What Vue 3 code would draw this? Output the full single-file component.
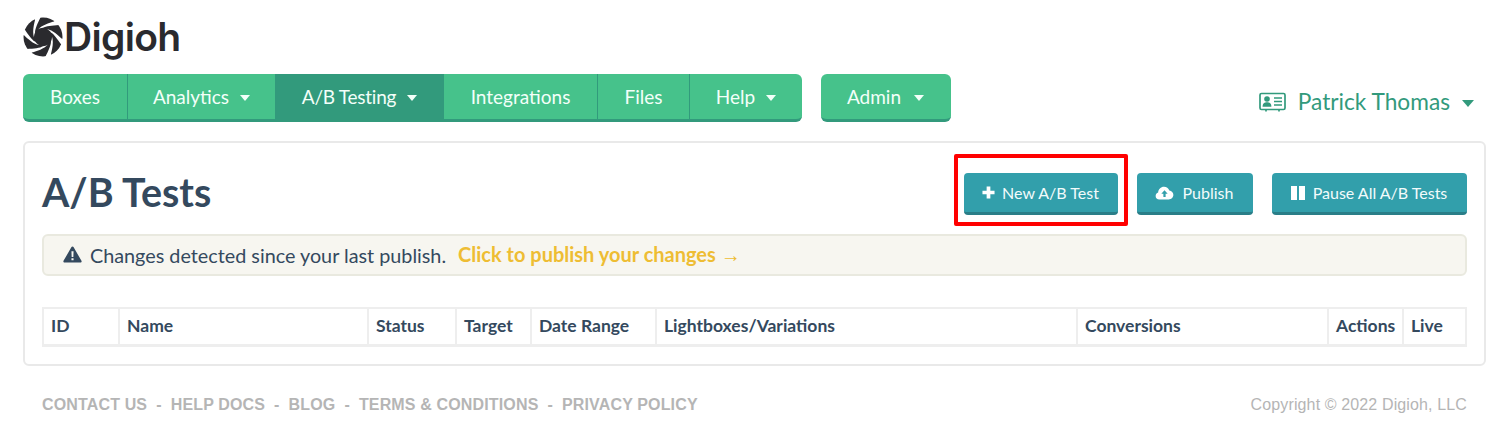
<script setup>
const navMain = [
  { label: 'Boxes', w: 104 },
  { label: 'Analytics', w: 148, caret: true },
  { label: 'A/B Testing', w: 169, caret: true, active: true },
  { label: 'Integrations', w: 153 },
  { label: 'Files', w: 92 },
  { label: 'Help', w: 113, caret: true }
]
const cols = [
  ['ID', 76], ['Name', 249], ['Status', 88], ['Target', 75], ['Date Range', 125],
  ['Lightboxes/Variations', 421], ['Conversions', 251], ['Actions', 75], ['Live', 63]
]
const footer = ['CONTACT US', 'HELP DOCS', 'BLOG', 'TERMS & CONDITIONS', 'PRIVACY POLICY']
const blades = [0, 60, 120, 180, 240, 300]
</script>

<template>
  <div class="page">
    <div class="logo">
      <svg class="logo-mark" viewBox="0 0 40 40" width="40" height="40">
        <circle cx="20" cy="20" r="19.5" fill="#2a2a2e" />
        <g v-for="a in blades" :key="a" :transform="`rotate(${a} 20 20)`">
          <path d="M15 12.5 C19 8 26 6 31 4.5 L35 0 L40 5 L36 8 C29 8.5 23 9 20 10.8 C18 11 16.5 11.5 15 12.5 Z" fill="#fff" />
        </g>
      </svg>
      <span class="logo-text">Digioh</span>
    </div>

    <div class="navrow">
      <nav class="nav">
        <a v-for="n in navMain" :key="n.label" class="nav-item" :class="{ active: n.active }" :style="{ width: n.w + 'px' }">
          {{ n.label }}<i v-if="n.caret" class="caret"></i>
        </a>
      </nav>
      <nav class="nav admin">
        <a class="nav-item admin-item">Admin<i class="caret"></i></a>
      </nav>
      <div class="user">
        <svg class="user-icon" viewBox="0 0 27 20" width="27" height="20">
          <rect x="1" y="1.5" width="25" height="16" rx="1.5" fill="none" stroke="#329a7c" stroke-width="1.7" />
          <path d="M7 18v1.5M20 18v1.5" stroke="#329a7c" stroke-width="1.7" />
          <circle cx="8" cy="7" r="2.8" fill="#329a7c" />
          <path d="M3.6 14.8 C3.6 11 5.5 10.2 8 10.2 C10.5 10.2 12.4 11 12.4 14.8 Z" fill="#329a7c" />
          <path d="M15 6h8M15 9.5h8M15 13h8" stroke="#329a7c" stroke-width="1.5" />
        </svg>
        <span>Patrick Thomas</span><i class="caret user-caret"></i>
      </div>
    </div>

    <main class="card">
      <div class="head">
        <h1>A/B Tests</h1>
        <div class="actions">
          <span class="highlight">
            <a class="btn w154">
              <svg viewBox="0 0 14 14" width="13" height="13"><path d="M5 0.5h4v4.5h4.5v4H9v4.5H5V9H.5V5H5z" fill="#fff" /></svg>
              New A/B Test
            </a>
          </span>
          <a class="btn w116">
            <svg viewBox="0 0 20 15" width="19" height="14"><path d="M4.5 14.5C2 14.5.5 12.7.5 10.6.5 8.8 1.6 7.4 3.2 6.9 3.4 3.5 6 .8 9.5.8c2.6 0 4.8 1.6 5.7 3.9 2.4.2 4.3 2.2 4.3 4.8 0 2.8-2.2 5-5 5z" fill="#fff" /><path d="M10 4.5l3.4 3.8h-2.2v3.6H8.8V8.3H6.6z" fill="#329fab" /></svg>
            Publish
          </a>
          <a class="btn w195">
            <svg viewBox="0 0 14 14" width="14" height="14"><path d="M0 0h6v14H0zM8 0h6v14H8z" fill="#fff" /></svg>
            Pause All A/B Tests
          </a>
        </div>
      </div>

      <div class="alert">
        <svg viewBox="0 0 18 16" width="19" height="17"><path d="M9 .5c.5 0 .9.3 1.1.7l7.4 12.8c.4.8-.1 1.6-1 1.6H1.5c-.9 0-1.4-.8-1-1.6L7.9 1.2C8.1.8 8.5.5 9 .5z" fill="#34495e" /><path d="M8 5h2l-.2 5.4H8.2zM8 11.5h2v2H8z" fill="#f7f6f0" /></svg>
        <span class="alert-text">Changes detected since your last publish.</span>
        <a class="alert-link">Click to publish your changes <span class="arrow">→</span></a>
      </div>

      <div class="table">
        <div v-for="c in cols" :key="c[0]" class="th" :style="{ width: c[1] + 'px' }">{{ c[0] }}</div>
      </div>
    </main>

    <footer class="footer">
      <div class="links">
        <template v-for="(f, i) in footer" :key="f">
          <span v-if="i" class="dash">-</span><a>{{ f }}</a>
        </template>
      </div>
      <div class="copy">Copyright © 2022 Digioh, LLC</div>
    </footer>
  </div>
</template>

<style>
html, body { margin: 0; background: #fff; }
</style>

<style scoped>
.page {
  width: 1511px;
  height: 438px;
  box-sizing: border-box;
  padding: 14px 25px 0 23px;
  font-family: Lato, "Liberation Sans", sans-serif;
  overflow: hidden;
}
.logo { display: flex; align-items: center; height: 46px; margin-bottom: 14px; }
.logo-mark { margin-right: 1px; margin-top: -1px; }
.logo-text {
  font-family: Inter, "Liberation Sans", sans-serif;
  font-weight: 600;
  font-size: 39px;
  letter-spacing: -0.7px;
  color: #2a2a2e;
  line-height: 46px;
}
.navrow { display: flex; align-items: flex-start; margin-bottom: 19px; }
.nav {
  display: flex;
  height: 45px;
  border-bottom: 3px solid #329a7c;
  border-radius: 6px;
  overflow: hidden;
  background: #46c28b;
}
.nav.admin { margin-left: 19px; }
.nav-item {
  box-sizing: border-box;
  display: flex;
  align-items: center;
  justify-content: center;
  color: #f3fff9;
  font-size: 19px;
  height: 45px;
  border-left: 1px solid #329a7c;
}
.nav-item:first-child { border-left: 0; }
.nav-item.active { background: #329a7c; border-left: 0; letter-spacing: -0.25px; }
.nav-item.active + .nav-item { border-left: 0; }
.admin-item { width: 130px; padding-right: 1px; }
.admin-item .caret { margin-left: 13px; }
.caret {
  display: inline-block;
  width: 0;
  height: 0;
  margin-left: 11px;
  margin-top: 2px;
  border-left: 5px solid transparent;
  border-right: 5px solid transparent;
  border-top: 6px solid currentColor;
}
.user {
  margin-left: auto;
  margin-top: 12px;
  display: flex;
  align-items: center;
  color: #329a7c;
  font-size: 22.7px;
  line-height: 32px;
  margin-right: 12px;
}
.user-icon { margin-right: 12px; }
.user-caret {
  margin-left: 12px;
  margin-top: 3px;
  border-left-width: 6px;
  border-right-width: 6px;
  border-top-width: 7px;
}
.card {
  box-sizing: border-box;
  width: 1463px;
  height: 225px;
  border: 2px solid #e9e9e9;
  border-radius: 6px;
  padding: 0 17px;
}
.head { display: flex; justify-content: space-between; height: 91px; }
h1 {
  margin: 24px 0 0;
  font-size: 39.4px;
  line-height: 50px;
  font-weight: 700;
  color: #34495e;
}
.actions { display: flex; align-items: flex-start; gap: 19px; padding-top: 30px; }
.highlight {
  display: flex;
  box-sizing: border-box;
  margin: -19px -10px -11px;
  padding: 15px 6px 7px;
  border: 4px solid #ff0000;
  border-radius: 2px;
  background: #fff;
}
.btn {
  box-sizing: border-box;
  display: flex;
  align-items: center;
  justify-content: center;
  gap: 7px;
  height: 42px;
  border-bottom: 3px solid #2a7e88;
  border-radius: 4px;
  background: #329fab;
  color: #f2fbfb;
  font-size: 16px;
}
.w154 { width: 154px; padding-right: 1px; }
.w116 { width: 116px; gap: 9px; padding-right: 2px; }
.w195 { width: 195px; gap: 8px; padding-right: 1px; }
.alert {
  box-sizing: border-box;
  display: flex;
  align-items: center;
  height: 42px;
  background: #f7f6f0;
  border: 2px solid #e9e9df;
  border-radius: 6px;
  padding: 0 0 1px 19px;
  font-size: 19.8px;
  color: #34495e;
}
.alert-text { margin-left: 8px; }
.alert-link { margin-left: 12px; font-weight: 700; font-size: 20px; color: #eebd33; }
.arrow { font-family: "Liberation Sans", sans-serif; font-weight: 400; }
.table {
  display: flex;
  margin-top: 31px;
  background: #eeeeee;
  width: 1425px;
  box-sizing: border-box;
  padding: 2px 2px 3px 0;
}
.th {
  box-sizing: border-box;
  height: 35px;
  line-height: 34px;
  padding-left: 7px;
  background: #fff;
  border-left: 2px solid #eeeeee;
  font-weight: 700;
  font-size: 17.5px;
  color: #34495e;
  white-space: nowrap;
}
.footer {
  display: flex;
  justify-content: space-between;
  align-items: center;
  height: 20px;
  margin-top: 29px;
  padding: 0 19px;
  font-family: "Liberation Sans", Arial, sans-serif;
  font-size: 16px;
  letter-spacing: 0.15px;
  color: #b5b5b5;
}
.links { font-weight: 700; display: flex; }
.dash { margin: 0 9px; }
.copy { color: #b5b5b5; letter-spacing: 0.13px; }
</style>
